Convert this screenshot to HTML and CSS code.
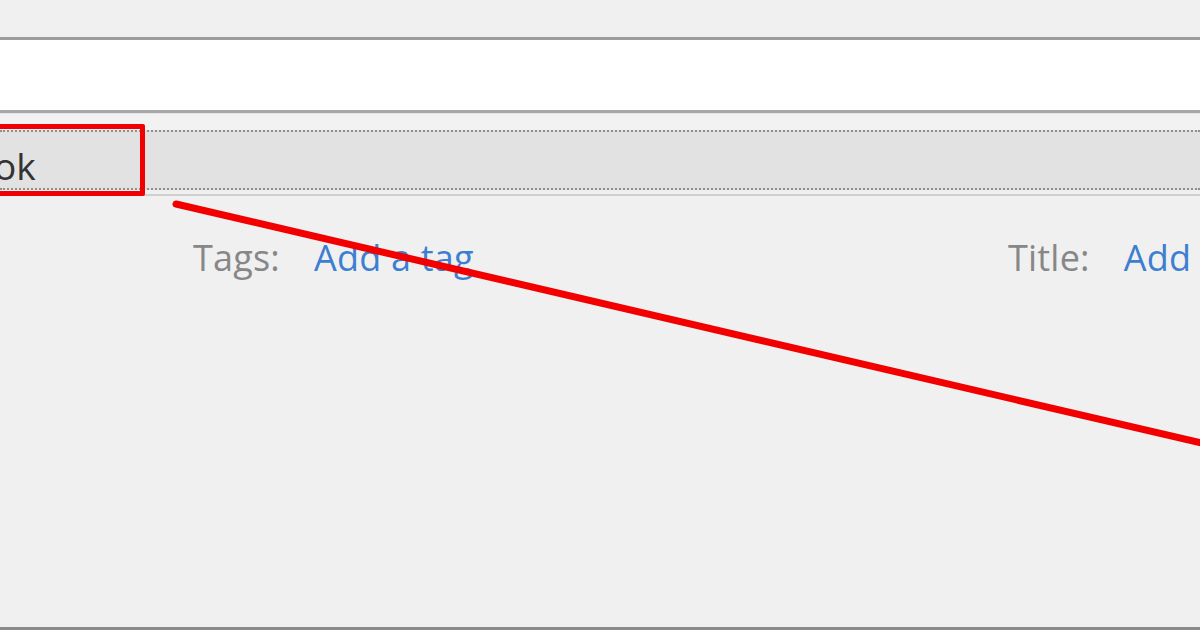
FILE: index.html
```html
<!DOCTYPE html>
<html>
<head>
<meta charset="utf-8">
<link rel="stylesheet" href="styles.css">
</head>
<body>
<div class="window">
  <div class="topstrip"></div>
  <div class="field"></div>
  <div class="gapstrip"></div>
  <div class="tabbar">
    <div class="tab">ok</div>
  </div>
  <div class="content">
    <div class="meta">
      <div class="group tags-group">
        <span class="label">Tags:</span>
        <span class="link">Add a tag</span>
      </div>
      <div class="group">
        <span class="label">Title:</span>
        <span class="link">Add a title</span>
      </div>
    </div>
  </div>
  <div class="bottomline"></div>
  <div class="highlight"></div>
  <svg class="arrow" width="1200" height="630" viewBox="0 0 1200 630">
    <line x1="176" y1="204" x2="1210" y2="445" stroke="#f20000" stroke-width="7" stroke-linecap="round"/>
  </svg>
</div>
</body>
</html>
```
FILE: styles.css
```css
html, body {
  margin: 0;
  padding: 0;
  background: #f0f0f0;
  overflow: hidden;
}
.window {
  position: relative;
  width: 1200px;
  height: 630px;
  display: flex;
  flex-direction: column;
  font-family: "Open Sans", "Noto Sans", sans-serif;
}
.topstrip {
  height: 37px;
  background: #f0f0f0;
  border-bottom: 3px solid #9c9c9c;
}
.field {
  height: 70px;
  background: #ffffff;
  border-bottom: 3px solid #a8a8a8;
}
.gapstrip {
  height: 16px;
  background: #f2f2f2;
  border-top: 1px solid #e4e4e4;
}
.tabbar {
  height: 56px;
  background: #e2e2e2;
  border-top: 2px dotted #8e8e8e;
  border-bottom: 2px dotted #8e8e8e;
  display: flex;
  align-items: center;
}
.tab {
  margin-left: -6px;
  font-size: 37px;
  color: #333333;
  line-height: 1;
  padding-top: 10px;
}
.content {
  flex: 1;
  border-top: 2px solid #d0d0d0;
  margin-top: 4px;
  background: #f0f0f0;
}
.meta {
  display: flex;
  padding-left: 193px;
  padding-top: 44px;
  white-space: nowrap;
}
.group {
  display: flex;
  flex-shrink: 0;
  gap: 34px;
  font-size: 36px;
  line-height: 1;
  letter-spacing: 0.2px;
}
.tags-group {
  width: 815px;
}
.label {
  color: #878787;
}
.link {
  color: #3c7fd0;
}
.bottomline {
  height: 3px;
  background: #8a8a8a;
}
.highlight {
  position: absolute;
  left: -10px;
  top: 124px;
  width: 145px;
  height: 62px;
  border: 5px solid #f00000;
  border-radius: 2px;
}
.arrow {
  position: absolute;
  left: 0;
  top: 0;
}
```
